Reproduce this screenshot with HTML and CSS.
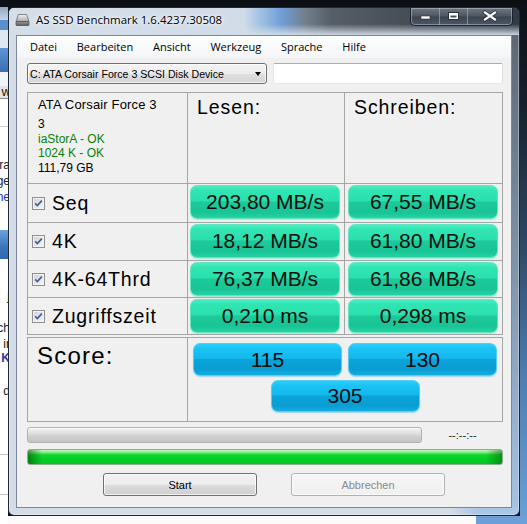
FILE: index.html
```html
<!DOCTYPE html>
<html lang="de">
<head>
<meta charset="utf-8">
<title>AS SSD Benchmark</title>
<link rel="stylesheet" href="styles.css">
</head>
<body>
<div class="desktop">
  <div class="bg-left" aria-hidden="true">
    <div class="bl bl-dark"></div>
    <div class="bl bl-glass"></div>
    <div class="bl bl-blue1"></div>
    <div class="bl bl-pale"></div>
    <div class="bl bl-blue2"></div>
    <div class="bl bl-pale2"></div>
    <div class="bl bl-head"><span>w</span></div>
    <div class="bl bl-white1"></div>
    <div class="bl bl-lines">
      <div class="frag">ra</div>
      <div class="frag">ge</div>
      <div class="frag frag-link">ne</div>
    </div>
    <div class="bl bl-blue3"></div>
    <div class="bl bl-lines2">
      <div class="frag frag-j">j</div>
      <div class="frag frag-ch">ch</div>
      <div class="frag frag-ir">ir</div>
      <div class="frag frag-k">K</div>
      <div class="frag frag-d">d</div>
    </div>
    <div class="bl bl-rule"></div>
    <div class="bl bl-rule2"></div>
    <div class="bl bl-rest"></div>
  </div>

  <div class="center-col">
    <div class="bg-top"></div>
    <div class="window">
      <div class="titlebar">
        <svg class="app-icon" width="15" height="14" viewBox="0 0 15 14">
          <defs>
            <linearGradient id="hddTop" x1="0" y1="0" x2="0" y2="1">
              <stop offset="0" stop-color="#f4f4f4"/>
              <stop offset="1" stop-color="#a9a9a9"/>
            </linearGradient>
            <linearGradient id="hddFront" x1="0" y1="0" x2="0" y2="1">
              <stop offset="0" stop-color="#9c9c9c"/>
              <stop offset="1" stop-color="#5a5a5a"/>
            </linearGradient>
          </defs>
          <path d="M3.5 1.5 H11.5 L14 8.5 H1 Z" fill="url(#hddTop)" stroke="#6a6a6a" stroke-width="0.8"/>
          <rect x="1" y="8.5" width="13" height="4" rx="1" fill="url(#hddFront)" stroke="#4f4f4f" stroke-width="0.8"/>
        </svg>
        <span class="title">AS SSD Benchmark 1.6.4237.30508</span>
        <div class="caption">
          <span class="cb cb-min">
            <svg width="29" height="18" viewBox="0 0 29 18"><rect x="10" y="8" width="9" height="3" fill="#fff" stroke="#2a3038" stroke-width="0.6"/></svg>
          </span>
          <span class="cb cb-max">
            <svg width="28" height="18" viewBox="0 0 28 18"><path d="M8.5 4.5 H18.5 V11.5 H8.5 Z" fill="none" stroke="#2a3038" stroke-width="1"/><path d="M9 5 H18 V11 H9 Z M10.5 7.5 V9.5 H16.5 V7.5 Z" fill="#fff" fill-rule="evenodd"/></svg>
          </span>
          <span class="cb cb-close">
            <svg width="46" height="18" viewBox="0 0 46 18"><path d="M17 4.5 L27 11.5 M27 4.5 L17 11.5" stroke="#2a3038" stroke-width="3.6" stroke-linecap="square"/><path d="M17 4.5 L27 11.5 M27 4.5 L17 11.5" stroke="#fff" stroke-width="2.2" stroke-linecap="square"/></svg>
          </span>
        </div>
      </div>

      <div class="client">
        <nav class="menu">
          <span>Datei</span>
          <span>Bearbeiten</span>
          <span>Ansicht</span>
          <span>Werkzeug</span>
          <span>Sprache</span>
          <span>Hilfe</span>
        </nav>

        <div class="drive-row">
          <div class="combo"><span class="combo-text">C: ATA Corsair Force 3 SCSI Disk Device</span><span class="combo-arrow"></span></div>
          <div class="textbox"></div>
        </div>

        <div class="results">
          <div class="cell drive">
            <div class="drive-name">ATA Corsair Force 3</div>
            <div class="drive-info">
              <div>3</div>
              <div class="ok">iaStorA - OK</div>
              <div class="ok">1024 K - OK</div>
              <div>111,79 GB</div>
            </div>
          </div>
          <div class="cell head">Lesen:</div>
          <div class="cell head">Schreiben:</div>

          <div class="cell label"><span class="check"></span><span>Seq</span></div>
          <div class="cell val-cell"><div class="val">203,80 MB/s</div></div>
          <div class="cell val-cell val-cell-w"><div class="val">67,55 MB/s</div></div>

          <div class="cell label"><span class="check"></span><span>4K</span></div>
          <div class="cell val-cell"><div class="val">18,12 MB/s</div></div>
          <div class="cell val-cell val-cell-w"><div class="val">61,80 MB/s</div></div>

          <div class="cell label"><span class="check"></span><span>4K-64Thrd</span></div>
          <div class="cell val-cell"><div class="val">76,37 MB/s</div></div>
          <div class="cell val-cell val-cell-w"><div class="val">61,86 MB/s</div></div>

          <div class="cell label"><span class="check"></span><span>Zugriffszeit</span></div>
          <div class="cell val-cell"><div class="val">0,210 ms</div></div>
          <div class="cell val-cell val-cell-w"><div class="val">0,298 ms</div></div>
        </div>

        <div class="score">
          <div class="cell score-label">Score:</div>
          <div class="cell score-values">
            <div class="sc">115</div>
            <div class="sc">130</div>
            <div class="sc sc-total">305</div>
          </div>
        </div>

        <div class="progress-row">
          <div class="bar-gray"></div>
          <div class="eta">--:--:--</div>
        </div>

        <div class="bar-green"></div>

        <div class="buttons">
          <div class="btn">Start</div>
          <div class="btn btn-disabled">Abbrechen</div>
        </div>
      </div>
    </div>
    <div class="bg-bottom"></div>
  </div>

  <div class="bg-right"></div>
</div>
</body>
</html>
```

FILE: styles.css
```css
* {
  box-sizing: border-box;
}

html,
body {
  margin: 0;
  padding: 0;
  background: #0e1115;
}

body {
  width: 527px;
  height: 524px;
  overflow: hidden;
  font-family: "Liberation Sans", Arial, sans-serif;
  color: #000;
}

.desktop {
  display: flex;
  width: 527px;
  height: 524px;
  overflow: hidden;
}

/* ---------- desktop behind the window ---------- */

.bg-left {
  width: 8px;
  flex: none;
  display: flex;
  flex-direction: column;
  overflow: hidden;
  background: #fff;
  font-size: 12px;
  color: #222;
}

.bl {
  flex: none;
  overflow: hidden;
}

.bl-dark { height: 7px; background: #0e1115; }
.bl-glass { height: 13px; background: linear-gradient(#8fa6c2, #c6d5e6); }
.bl-blue1 { height: 10px; background: #5a8ecf; }
.bl-pale { height: 18px; background: #dfe8f2; }
.bl-blue2 { height: 24px; background: linear-gradient(#5f95d4, #3a70b3); }
.bl-pale2 { height: 14px; background: #f1f4f8; }

.bl-head {
  height: 13px;
  background: #e4e4e4;
  border-bottom: 1px solid #8a8a8a;
  display: flex;
  justify-content: flex-end;
  line-height: 12px;
  font-size: 13px;
}

.bl-head span {
  margin-right: -3px;
}

.bl-white1 {
  height: 28px;
  border-bottom: 1px solid #cfcfcf;
}

.bl-lines {
  height: 103px;
  padding-top: 30px;
  line-height: 16px;
}

.frag {
  display: flex;
  justify-content: flex-end;
  white-space: nowrap;
  margin-right: -2px;
}

.frag-link {
  color: #2b2bb5;
}

.bl-blue3 {
  height: 29px;
  background: linear-gradient(#6ea2dc, #3c78bf 55%, #2f68ad);
}

.bl-lines2 {
  height: 180px;
  line-height: 14px;
}

.frag-j { margin-top: 30px; }
.frag-ch { margin-top: 18px; }
.frag-ir { margin-top: 2px; }
.frag-k { color: #3434a8; font-weight: bold; }
.frag-d { margin-top: 19px; }

.bl-rule { height: 16px; border-bottom: 1px solid #c4c4c4; }
.bl-rule2 { height: 40px; border-bottom: 1px solid #c4c4c4; }
.bl-rest { height: 40px; }

.center-col {
  width: 512px;
  flex: none;
  display: flex;
  flex-direction: column;
}

.bg-top {
  height: 7px;
  flex: none;
  background: #0c0f13;
}

.bg-bottom {
  height: 8px;
  flex: none;
  background: linear-gradient(90deg, #fbfbfb 0, #fbfbfb 468px, #6b9fd6 468px);
}

.bg-right {
  width: 7px;
  flex: none;
  background: linear-gradient(#0c1016 0, #17212d 20%, #2c4560 45%, #4e7eb1 72%, #6ba1d8 100%);
}

/* ---------- window frame ---------- */

.window {
  height: 509px;
  flex: none;
  display: flex;
  flex-direction: column;
  border: 1px solid rgba(14, 20, 28, 0.9);
  border-radius: 6px;
  overflow: hidden;
  background:
    linear-gradient(90deg, rgba(170, 198, 230, 0) 440px, #a8c6e6 470px) left bottom / 100% 8px no-repeat,
    linear-gradient(#59626d, #76899e 40%, #a6c4e6) right top / 8px 100% no-repeat,
    #d3dde8;
  box-shadow: inset 0 0 0 1px rgba(255, 255, 255, 0.35);
}

.titlebar {
  height: 27px;
  flex: none;
  display: flex;
  align-items: flex-start;
  padding-left: 6px;
  background:
    linear-gradient(rgba(211, 221, 232, 0) 60%, rgba(211, 221, 232, 0.95) 100%),
    linear-gradient(90deg, #d5dfea 0, #d1dce8 235px, #a5c3e4 250px, #6f9fd6 272px, #737f8c 296px, #565e67 322px, #484f57 390px, #3c4550 440px, #323b45 100%);
}

.app-icon {
  flex: none;
  margin-top: 5px;
}

.title {
  margin-left: 6px;
  margin-top: 4px;
  font-family: "Open Sans", "Liberation Sans", sans-serif;
  font-size: 11.5px;
  line-height: 16px;
  color: #000;
  text-shadow: 0 0 6px #fff, 0 0 3px #fff;
  white-space: nowrap;
}

.caption {
  margin-left: auto;
  margin-right: 6px;
  display: flex;
  height: 18px;
  border: 1px solid rgba(22, 30, 40, 0.9);
  border-top: none;
  border-radius: 0 0 5px 5px;
  overflow: hidden;
  background: linear-gradient(#6e7782, #4c5560 48%, #3b444f 52%, #4d5864);
  box-shadow: inset 0 0 0 1px rgba(200, 210, 222, 0.45);
}

.cb {
  display: block;
  height: 17px;
}

.cb svg {
  display: block;
}

.cb-min { width: 28px; }
.cb-max { width: 28px; border-left: 1px solid rgba(200, 210, 222, 0.45); }
.cb-close { width: 45px; border-left: 1px solid rgba(200, 210, 222, 0.45); }

/* ---------- client area ---------- */

.client {
  margin: 0 7px;
  height: 473px;
  flex: none;
  display: flex;
  flex-direction: column;
  border: 1px solid #7a8899;
  background: #f0f0f0;
}

.menu {
  height: 22px;
  flex: none;
  display: flex;
  gap: 19.8px;
  padding-left: 13px;
  font-family: "Open Sans", "Liberation Sans", sans-serif;
  font-size: 11px;
  line-height: 22px;
  background: linear-gradient(#fefefe, #f3f5f8);
}

.drive-row {
  margin: 5px 8px 0 10px;
  height: 21px;
  flex: none;
  display: flex;
  gap: 6px;
}

.combo {
  width: 240px;
  flex: none;
  display: flex;
  align-items: center;
  padding-left: 2px;
  border: 1px solid #707070;
  border-radius: 3px;
  background: linear-gradient(#f4f4f4 0, #ececec 50%, #e0e0e0 51%, #d4d4d4 100%);
  box-shadow: inset 0 0 0 1px rgba(255, 255, 255, 0.7);
  font-size: 10.6px;
  white-space: nowrap;
}

.combo-arrow {
  margin-left: auto;
  margin-right: 5px;
  width: 0;
  height: 0;
  border-left: 3.5px solid transparent;
  border-right: 3.5px solid transparent;
  border-top: 4px solid #000;
}

.textbox {
  flex: 1;
  background: #fff;
  border: 1px solid;
  border-color: #abadb3 #dbdfe6 #e3e9ef #e2e3ea;
  border-radius: 2px;
}

/* ---------- result table ---------- */

.results {
  margin: 8px 8px 0 10px;
  flex: none;
  display: grid;
  grid-template-columns: 159px 156px 157px;
  grid-template-rows: 90px 38px 37px 36px 36px;
  gap: 1px;
  background: #a5a5a5;
  border: 1px solid #a5a5a5;
}

.cell {
  background: #f0f0f0;
}

.drive {
  padding: 4px 0 0 10px;
}

.drive-name {
  font-size: 13px;
  line-height: 15px;
  letter-spacing: 0.15px;
}

.drive-info {
  margin-top: 5px;
  font-size: 12px;
  line-height: 14.6px;
}

.ok {
  color: #0a800a;
}

.head {
  padding: 3px 0 0 9px;
  font-size: 19.5px;
  line-height: 23px;
  letter-spacing: 0.9px;
}

.label {
  display: flex;
  align-items: center;
  padding-left: 4px;
  font-size: 19.5px;
  letter-spacing: 0.8px;
}

.check {
  width: 13px;
  height: 13px;
  flex: none;
  margin-right: 7px;
  border: 1px solid #8e8f8f;
  background:
    url("data:image/svg+xml;utf8,<svg xmlns='http://www.w3.org/2000/svg' width='11' height='11' viewBox='0 0 11 11'><path d='M2.2 5.3 L4.4 7.6 L8.8 2.6' fill='none' stroke='%234a5e99' stroke-width='1.7'/></svg>") center / 11px 11px no-repeat,
    linear-gradient(135deg, #cdd2d9, #f6f6f6);
  box-shadow: inset 0 0 0 1px #f4f4f4;
}

.val-cell {
  padding: 1px 0 0 2px;
}

.val-cell-w {
  padding-left: 3px;
}

.val {
  width: 150px;
  height: 34px;
  display: flex;
  align-items: center;
  justify-content: center;
  border: 1px solid #63e6c0;
  border-radius: 7px;
  font-size: 21px;
  color: #0b0f0d;
  white-space: nowrap;
  background: linear-gradient(#4aedc2 0%, #31e5b2 14%, #2ae0ad 46%, #1dca9b 50%, #19c495 82%, #24d3a4 100%);
  box-shadow: 0 1px 1px rgba(120, 230, 200, 0.6);
}

/* ---------- score ---------- */

.score {
  margin: 2px 8px 0 10px;
  height: 85px;
  flex: none;
  display: grid;
  grid-template-columns: 159px 314px;
  gap: 1px;
  background: #a5a5a5;
  border: 1px solid #a5a5a5;
}

.score-label {
  padding: 4px 0 0 9px;
  font-size: 24px;
  line-height: 28px;
  letter-spacing: 1.2px;
}

.score-values {
  display: grid;
  grid-template-columns: 149px 149px;
  grid-template-rows: 33px 32px;
  column-gap: 6px;
  row-gap: 4px;
  padding: 5px 0 0 5px;
  align-content: start;
}

.sc {
  display: flex;
  align-items: center;
  justify-content: center;
  border: 1px solid #58cdf2;
  border-radius: 7px;
  font-size: 21px;
  color: #070b10;
  background: linear-gradient(#2bcff9 0%, #1bc3f5 15%, #14b8ed 46%, #0aa4d9 50%, #099dd3 82%, #13ade2 100%);
  box-shadow: 0 1px 1px rgba(110, 200, 240, 0.6);
}

.sc-total {
  grid-column: 1 / span 2;
  justify-self: center;
  width: 149px;
}

/* ---------- progress ---------- */

.progress-row {
  margin: 5px 8px 0 10px;
  height: 16px;
  flex: none;
  display: flex;
}

.bar-gray {
  width: 395px;
  flex: none;
  border: 1px solid #b1b1b1;
  border-radius: 3px;
  background: linear-gradient(#f2f2f2, #dedede 40%, #d0d0d0 60%, #c4c4c4);
  box-shadow: inset 0 1px 0 rgba(255, 255, 255, 0.8);
}

.eta {
  flex: 1;
  text-align: center;
  font-size: 11px;
  line-height: 16px;
  color: #222;
}

.bar-green {
  margin: 6px 8px 0 10px;
  height: 16px;
  flex: none;
  border: 1px solid #8fae8f;
  border-radius: 3px;
  background:
    linear-gradient(90deg, rgba(0, 70, 0, 0.55) 0, rgba(0, 70, 0, 0) 14px, rgba(0, 70, 0, 0) calc(100% - 16px), rgba(0, 70, 0, 0.45) 100%),
    linear-gradient(#c6f7c6 0, #7ee87e 18%, #12d52f 34%, #03cf25 60%, #02c820 100%);
}

/* ---------- buttons ---------- */

.buttons {
  margin-top: 8px;
  padding-left: 86px;
  height: 23px;
  flex: none;
  display: flex;
  gap: 34px;
}

.btn {
  width: 154px;
  height: 23px;
  display: flex;
  align-items: center;
  justify-content: center;
  border: 1px solid #707070;
  border-radius: 3px;
  font-size: 11px;
  background: linear-gradient(#f2f2f2 0, #ebebeb 50%, #dddddd 51%, #cfcfcf 100%);
  box-shadow: inset 0 0 0 1px rgba(255, 255, 255, 0.7);
}

.btn-disabled {
  border-color: #adb2b5;
  color: #8a8a8a;
  background: linear-gradient(#f6f6f6, #f0f0f0);
}
```
